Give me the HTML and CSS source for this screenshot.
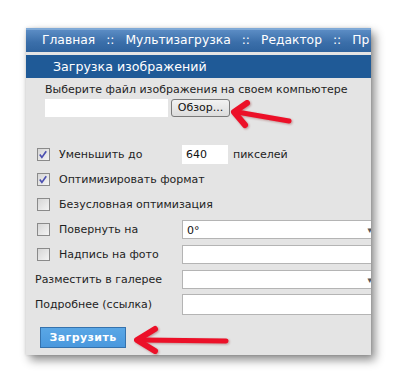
FILE: index.html
```html
<!DOCTYPE html>
<html lang="ru">
<head>
<meta charset="utf-8">
<link rel="stylesheet" href="styles.css">
</head>
<body>
<div class="stage">
  <div class="panel">
    <div class="nav">
      <span>Главная</span><span class="sep">::</span><span>Мультизагрузка</span><span class="sep">::</span><span>Редактор</span><span class="sep">::</span><span>Пр</span>
    </div>
    <div class="title">Загрузка изображений</div>
    <div class="body">
      <div class="choose">Выберите файл изображения на своем компьютере</div>
      <div class="file-row">
        <span class="file-box"></span>
        <span class="browse">Обзор...</span>
      </div>
      <div class="form">
        <label class="chk"><span class="cb"><svg viewBox="0 0 13 13" width="13" height="13"><path d="M3 6.5 L5.3 9.6 L10 3" fill="none" stroke="#4b4fb0" stroke-width="1.8"/></svg></span>Уменьшить до</label>
        <div class="field"><span class="input small">640</span><span class="unit">пикселей</span></div>

        <label class="chk"><span class="cb"><svg viewBox="0 0 13 13" width="13" height="13"><path d="M3 6.5 L5.3 9.6 L10 3" fill="none" stroke="#4b4fb0" stroke-width="1.8"/></svg></span>Оптимизировать формат</label>
        <div class="field"></div>

        <label class="chk"><span class="cb"></span>Безусловная оптимизация</label>
        <div class="field"></div>

        <label class="chk"><span class="cb"></span>Повернуть на</label>
        <div class="field"><span class="input wide select">0°<span class="caret">▾</span></span></div>

        <label class="chk"><span class="cb"></span>Надпись на фото</label>
        <div class="field"><span class="input wide"></span></div>

        <label class="plain">Разместить в галерее</label>
        <div class="field"><span class="input wide select"><span class="caret">▾</span></span></div>

        <label class="plain">Подробнее (ссылка)</label>
        <div class="field"><span class="input wide tall"></span></div>
      </div>
      <div class="submit-row"><span class="submit">Загрузить</span></div>
    </div>
  </div>
  <svg class="arrows" width="397" height="382" viewBox="0 0 397 382">
    <g fill="none" stroke="#ec1028" stroke-linecap="round" stroke-linejoin="round">
      <path d="M289 121 L237 112" stroke-width="5"/>
      <path d="M247 103 L234 112 L245 125" stroke-width="6"/>
      <path d="M226 341 L142 340" stroke-width="5"/>
      <path d="M155 329 L137 340 L155 351" stroke-width="6"/>
    </g>
  </svg>
</div>
</body>
</html>
```
FILE: styles.css
```css
* { box-sizing: border-box; }
html, body { margin: 0; padding: 0; background: #fff; }
body { font-family: "DejaVu Sans", Verdana, sans-serif; }

.stage {
  position: relative;
  width: 397px;
  height: 382px;
  padding: 28px 0 0 26px;
}

.panel {
  width: 345px;
  height: 327px;
  background: #e4e4e4;
  overflow: hidden;
  box-shadow: 4px 5px 9px rgba(0,0,0,0.45), 0 0 3px rgba(0,0,0,0.15);
  display: flex;
  flex-direction: column;
}

.nav {
  height: 24px;
  border-top: 2px solid #7fa9d6;
  background: linear-gradient(#5b8cc4, #3b6faa 55%, #2f639e);
  color: #fff;
  font-size: 12.3px;
  line-height: 21px;
  padding-left: 16px;
  white-space: nowrap;
  display: flex;
}
.nav .sep { margin: 0 11px 0 11px; }

.title {
  margin-top: 3px;
  height: 23px;
  background: #1f5a97;
  color: #fff;
  font-size: 12.6px;
  line-height: 23px;
  padding-left: 27px;
  white-space: nowrap;
}

.body {
  padding: 5px 0 0 9px;
  color: #1e1e1e;
  font-size: 11px;
}

.choose {
  padding-left: 10px;
  height: 16px;
  line-height: 14px;
  white-space: nowrap;
}

.file-row {
  display: flex;
  align-items: center;
  gap: 3px;
  padding-left: 10px;
  height: 18px;
}
.file-box {
  width: 123px;
  height: 18px;
  background: #fff;
}
.browse {
  width: 59px;
  height: 18px;
  border: 1px solid #7a7a7a;
  border-radius: 3px;
  background: linear-gradient(#f2f2f2, #dcdcdc);
  font-size: 11px;
  line-height: 16px;
  text-align: center;
  color: #111;
}

.form {
  margin-top: 25px;
  display: grid;
  grid-template-columns: 147px 200px;
  grid-auto-rows: 25px;
  align-items: center;
  white-space: nowrap;
}
.chk {
  display: flex;
  align-items: center;
  gap: 9px;
  padding-left: 2px;
}
.plain { padding-left: 0; }
.cb {
  flex: 0 0 13px;
  width: 13px;
  height: 13px;
  border: 1px solid #8a8a8a;
  background: linear-gradient(135deg, #d6d6d6, #f4f4f4);
  display: inline-flex;
}
.cb svg { margin: -1px 0 0 -1px; }

.field { display: flex; align-items: center; }
.input {
  background: #fff;
  height: 19px;
  line-height: 19px;
  padding-left: 4px;
  font-size: 11px;
  color: #111;
}
.small { width: 46px; }
.unit { margin-left: 5px; }
.wide {
  width: 195px;
  border: 1px solid #b4b4b4;
  position: relative;
}
.tall { height: 21px; }
.caret {
  position: absolute;
  right: 4px;
  top: 0;
  font-size: 9px;
  color: #555;
}

.submit-row { padding: 10px 0 0 5px; }
.submit {
  display: inline-block;
  width: 86px;
  height: 21px;
  background: linear-gradient(#5aa7e6, #4a98dd);
  border: 1px solid #3572ad;
  color: #fff;
  font-weight: bold;
  font-size: 11px;
  line-height: 19px;
  text-align: center;
  letter-spacing: 0.4px;
}

.arrows {
  position: absolute;
  left: 0;
  top: 0;
  pointer-events: none;
  filter: drop-shadow(1px 1px 1px rgba(120,0,0,0.35));
}
```
